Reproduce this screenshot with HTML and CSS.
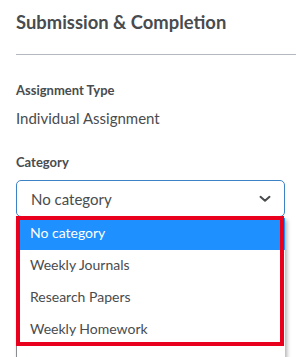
FILE: index.html
```html
<!DOCTYPE html>
<html lang="en">
<head>
  <meta charset="UTF-8">
  <meta name="viewport" content="width=device-width, initial-scale=1.0">
  <title>Submission &amp; Completion</title>
  <link rel="stylesheet" href="styles.css">
</head>
<body>
  <div class="panel">
    <h2 class="panel-title">Submission &amp; Completion</h2>
    <hr class="divider">

    <div class="field-label">Assignment Type</div>
    <div class="field-value">Individual Assignment</div>

    <div class="field-label category-label">Category</div>
    <div class="select">
      <span class="select-text">No category</span>
      <svg class="chevron" width="12" height="8" viewBox="0 0 12 8">
        <path d="M1.5 1.8 L6 5.8 L10.5 1.8" fill="none" stroke="#494c4e" stroke-width="2" stroke-linecap="round" stroke-linejoin="round"/>
      </svg>
    </div>

    <!-- lista aberta do select -->
    <div class="dropdown">
      <div class="option selected">No category</div>
      <div class="option">Weekly Journals</div>
      <div class="option">Research Papers</div>
      <div class="option">Weekly Homework</div>
      <div class="highlight-box"></div>
    </div>
  </div>
</body>
</html>
```

FILE: styles.css
```css
html, body {
  margin: 0;
  padding: 0;
  overflow: hidden;
  background: white;
}
body {
  font-family: Lato, "Open Sans", sans-serif;
  color: #494c4e;
}
.panel {
  padding-left: 16px;
  height: 357px;
}
.panel-title {
  margin: 0;
  padding-top: 10px;
  font-size: 18.4px;
  line-height: 24px;
  font-weight: 700;
}
.divider {
  margin: 20px 0 0 0;
  border: none;
  height: 1px;
  background: #b3b9be;
}
.field-label {
  margin-top: 25px;
  font-size: 13px;
  line-height: 20px;
  font-weight: 700;
}
.field-value {
  margin-top: 8px;
  font-size: 15px;
  line-height: 20px;
}
.category-label {
  margin-top: 24px;
}
.select {
  margin-top: 8px;
  width: 269px;
  height: 37px;
  box-sizing: border-box;
  border: 1px solid #3d82c4;
  border-radius: 5px;
  display: flex;
  align-items: center;
  justify-content: space-between;
  padding: 0 13px 0 14px;
  font-size: 15px;
}
.chevron {
  display: block;
}
.dropdown {
  position: relative;
  margin-top: 1px;
  width: 269px;
  height: 150px;
  box-sizing: border-box;
  background: white;
  border-left: 1px solid #8a8d90;
  box-shadow: 2px 2px 4px rgba(0, 0, 0, 0.3);
}
.option {
  height: 32px;
  line-height: 30px;
  padding-left: 13px;
  font-size: 14px;
}
.option.selected {
  background: #1e90ff;
  color: white;
}
.highlight-box {
  position: absolute;
  left: -1px;
  top: -2px;
  width: 268px;
  height: 130px;
  box-sizing: border-box;
  border: 4px solid #e8001c;
}
```
